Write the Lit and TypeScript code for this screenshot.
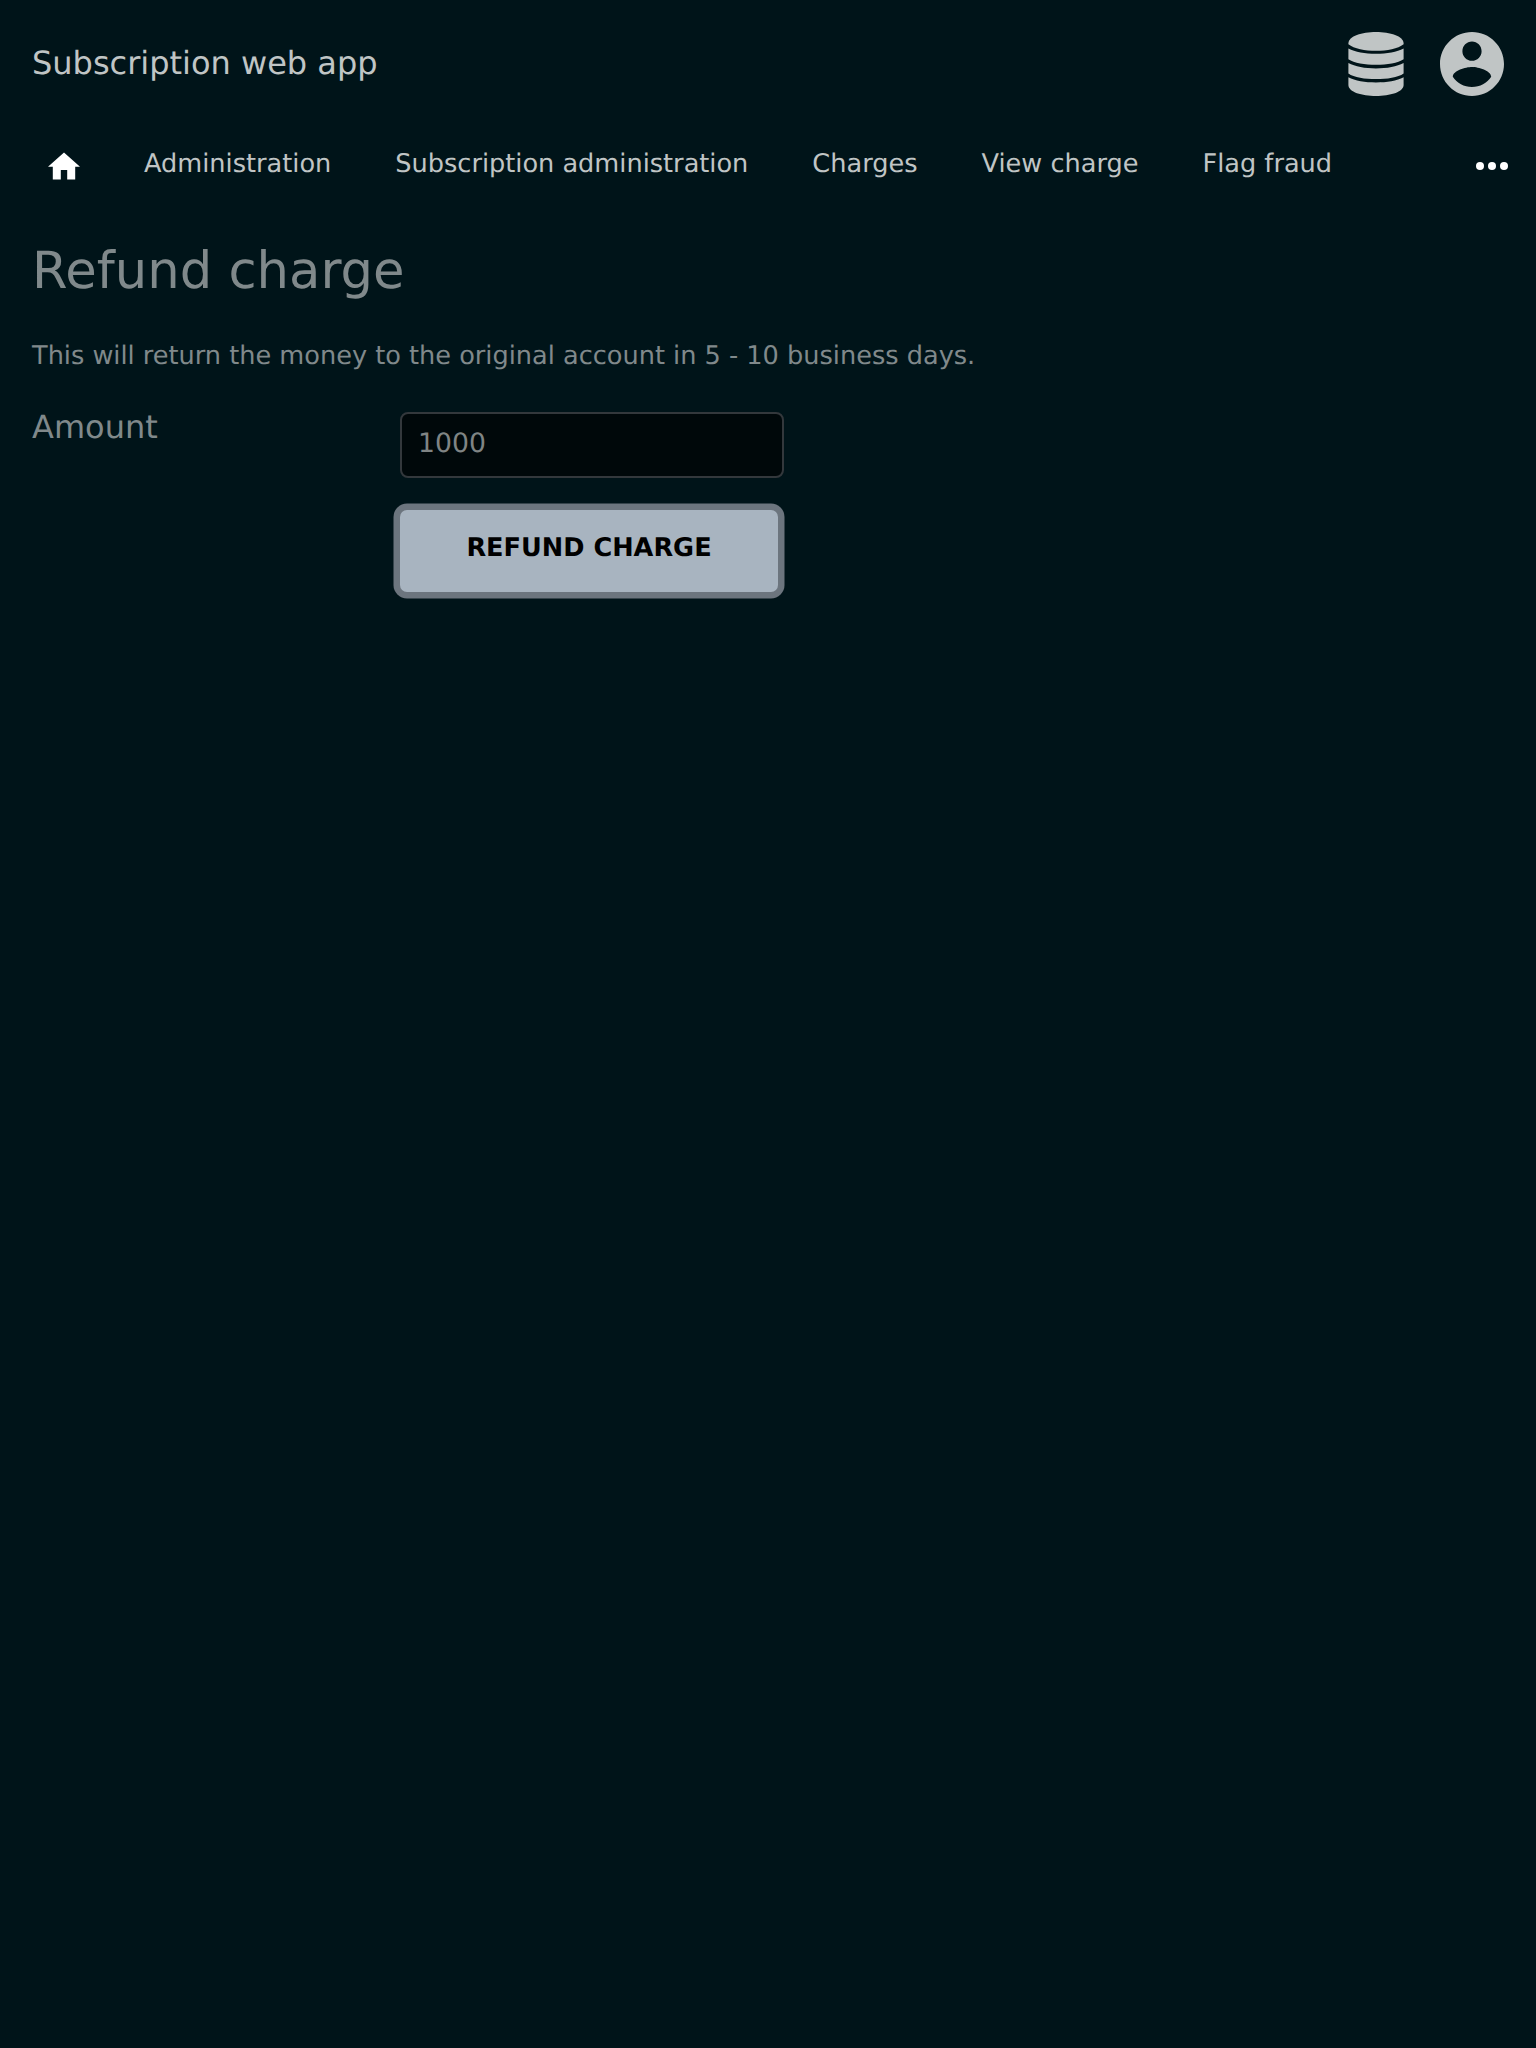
import { LitElement, html, css } from "lit";
import { customElement } from "lit/decorators.js";

@customElement("app-root")
class AppRoot extends LitElement {
  static styles = css`
    :host { display: block; min-height: 2048px; background: #001419; color: #c0c5c5; font-family: "DejaVu Sans", sans-serif; font-size: 25.6px; text-rendering: geometricPrecision; }
    * { box-sizing: border-box; }
    header { height: 128px; padding: 0 32px; display: flex; align-items: center; justify-content: space-between; font-size: 32px; }
    .title { margin-top: -2px; }
    .icons { display: flex; gap: 32px; }
    .icons svg { width: 64px; height: 64px; fill: #c0c5c5; display: block; }
    nav { height: 72px; display: flex; align-items: center; padding: 0 28px 0 48px; }
    .home, .more { width: 32px; height: 32px; fill: #fff; display: block; flex: none; margin-top: 4px; }
    .links { display: flex; gap: 64px; margin: 0 0 0 64px; flex: 1; }
    main { padding: 0 32px; color: #80898b; }
    h1 { font-weight: 400; font-size: 51.2px; line-height: 60px; margin: 41px 0 0; }
    p { margin: 41px 0 0; line-height: 28px; }
    .row { display: grid; grid-template-columns: 368px 384px; margin-top: 42px; }
    label { font-size: 32px; line-height: 38px; margin-top: -4px; }
    input { display: block; width: 384px; height: 66px; font: inherit; font-size: 26.667px; color: #7f8484; background: #00080a; border: 2px solid #33383c; border-radius: 8px; padding: 0 16px 4px; outline: 0; text-rendering: inherit; }
    button { margin: 32px 0 0; width: 378px; height: 82px; border: 0; border-radius: 7px; box-shadow: 0 0 0 6.500px #6c757e; background: #a8b4c0; color: #000; font: bold 25.6px "DejaVu Sans", sans-serif; padding: 0 0 7px; display: block; text-rendering: inherit; }
  `;
  render() {
    return html`
      <header>
        <div class="title">Subscription web app</div>
        <div class="icons">
          <svg viewBox="0 0 64 64"><path d="M4.400 11.500C4.400 4 18 0 32 0s27.600 4 27.600 11.500v.7C54 16.800 43 18.800 32 18.800S10 16.800 4.400 12.200z"/><path d="M4.400 16.500C11 20 21 21.800 32 21.800S53 20 59.600 16.500V27.200C54 31 43 32.700 32 32.700S10 31 4.400 27.200z"/><path d="M4.400 31C11 34.600 21 36.400 32 36.400S53 34.600 59.600 31V41.500C54 45.500 43 47.100 32 47.100S10 45.500 4.400 41.500z"/><path d="M4.400 45.300C11 48.800 21 50.500 32 50.500S53 48.800 59.600 45.300V53C59.600 60 46 64 32 64S4.400 60 4.400 53z"/></svg>
          <svg viewBox="2 2 20 20"><path d="M12 2C6.480 2 2 6.480 2 12s4.480 10 10 10 10-4.480 10-10S17.520 2 12 2zm0 3c1.660 0 3 1.340 3 3s-1.340 3-3 3-3-1.340-3-3 1.340-3 3-3zm0 14.200c-2.500 0-4.710-1.280-6-3.220.03-1.990 4-3.080 6-3.080 1.990 0 5.970 1.090 6 3.080-1.290 1.940-3.500 3.220-6 3.220z"/></svg>
        </div>
      </header>
      <nav>
        <svg class="home" viewBox="2 1.500 20 20"><path d="M10 20v-6h4v6h5v-8h3L12 3 2 12h3v8z"/></svg>
        <div class="links"><span>Administration</span><span>Subscription administration</span><span>Charges</span><span>View charge</span><span>Flag fraud</span></div>
        <svg class="more" viewBox="0 0 32 32"><circle cx="4" cy="16" r="4"/><circle cx="16" cy="16" r="4"/><circle cx="28" cy="16" r="4"/></svg>
      </nav>
      <main>
        <h1>Refund charge</h1>
        <p>This will return the money to the original account in 5 - 10 business days.</p>
        <div class="row"><label>Amount</label><div><input value="1000" /><button>REFUND CHARGE</button></div></div>
      </main>`;
  }
}
